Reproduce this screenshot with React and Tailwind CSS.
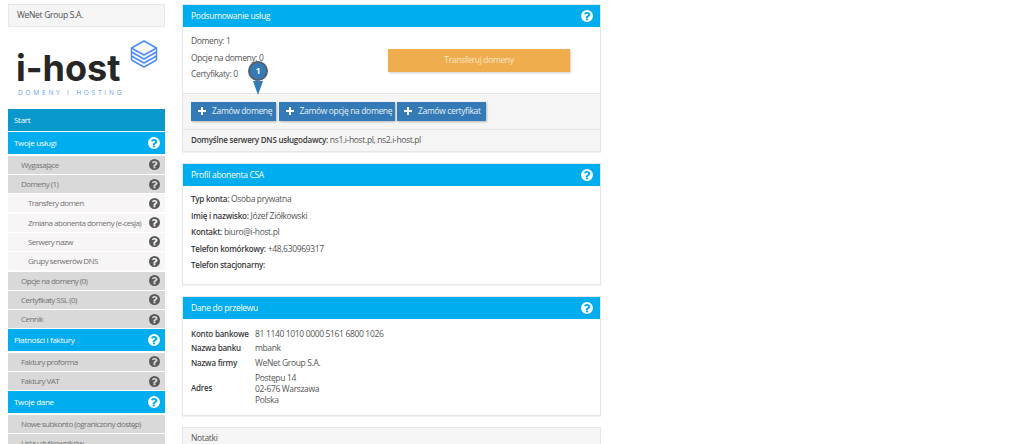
import React from "react";

const Help = ({ className = "text-[#5a5a5a]", size = 12 }) => (
  <svg width={size} height={size} viewBox="0 0 24 24" className={`${className} shrink-0`}>
    <path fill="currentColor" fillRule="evenodd" d="M12 0a12 12 0 1 1 0 24a12 12 0 0 1 0-24ZM12.300 4.200c-2.900 0-4.800 1.300-6.200 3.400l2.500 1.900c.9-1.100 1.700-1.800 3.300-1.800 1.200 0 2.400.7 2.400 1.800 0 .9-.7 1.400-1.900 2-1.400.8-2.900 1.700-2.900 3.900v.8h4.200v-.5c0-1.200.7-1.600 1.900-2.300 1.500-.8 3-1.900 3-4.100 0-3-3-5.100-6.300-5.100ZM9.900 17.100v3.300h4.200v-3.300Z" />
  </svg>
);

const Plus = () => (
  <svg width="8" height="8" viewBox="0 0 8 8" className="text-white shrink-0">
    <path fill="currentColor" d="M3 0h2v3h3v2H5v3H3V5H0V3h3Z" />
  </svg>
);

const Blue = ({ label, dark }) => (
  <div className={`h-[22px] mb-[1.400px] flex items-center justify-between pl-[6px] pr-[5px] text-white text-[8px] tracking-[-0.3px] ${dark ? "bg-[#0a97c9]" : "bg-[#00adef]"}`}>
    <span>{label}</span>
    {!dark && <Help className="text-white" size={12} />}
  </div>
);

const Sub = ({ label, light, noIcon }) => (
  <div className={`h-[18px] mb-[1.300px] flex items-center justify-between pr-[5.500px] text-[8px] tracking-[-0.55px] text-[#737373] ${light ? "bg-[#f7f5f6] pl-[20px]" : "bg-[#d9d9d9] pl-[13px]"}`}>
    <span className="whitespace-nowrap">{label}</span>
    {!noIcon && <Help size={11} />}
  </div>
);

const Panel = ({ title, children }) => (
  <section className="w-[419px] border border-[#e6e6e6] bg-white shadow-[0_1px_1px_rgba(0,0,0,0.05)]">
    <div className="h-[22px] bg-[#00adef] flex items-center justify-between pl-[8px] pr-[7px] text-white text-[8.500px] tracking-[-0.3px]">
      <span>{title}</span>
      <Help className="text-white" size={12} />
    </div>
    {children}
  </section>
);

const OrderBtn = ({ label, w }) => (
  <button className={`h-[19px] bg-[#337ab7] text-[#e8f0f7] text-[8.500px] tracking-[-0.35px] flex items-center gap-[6px] pl-[7px] shadow-[1px_1px_2px_rgba(0,0,0,0.25)] ${w}`}>
    <Plus />
    <span className="whitespace-nowrap">{label}</span>
  </button>
);

const Strong = ({ children }) => (
  <b className="font-semibold text-[8px] tracking-[-0.22px] text-[#3a3a3a]">{children}</b>
);

const Info = ({ k, v }) => (
  <div className="h-[16.500px] leading-[16.500px]">
    <Strong>{k}</Strong> {v}
  </div>
);

const BankRow = ({ k, children, className = "" }) => (
  <div className={`flex items-center ${className}`}>
    <div className="w-[64px] shrink-0 whitespace-nowrap"><Strong>{k}</Strong></div>
    <div>{children}</div>
  </div>
);

export default function App() {
  return (
    <div className="w-[1024px] h-[444px] overflow-hidden bg-white flex font-['Open_Sans',sans-serif] text-[#555]">
      <aside className="w-[157px] ml-[8px] shrink-0">
        <div className="mt-[4px] h-[23px] bg-[#f5f5f5] border border-[#e8e8e8] flex items-center pl-[8px] text-[8.500px] tracking-[-0.3px] text-[#505050]">
          WeNet Group S.A.
        </div>
        <div className="h-[82px] relative">
          <span className="absolute left-[8px] top-[21px] text-[36px] leading-[40px] font-['Inter',sans-serif] font-bold text-[#262626]">i-host</span>
          <span className="absolute left-[10px] top-[61px] text-[6.500px] tracking-[2.800px] text-[#5b9cf0] whitespace-nowrap">DOMENY I HOSTING</span>
          <svg width="28" height="30" viewBox="0 0 28 30" className="absolute left-[122px] top-[13px] text-[#4a8df0]" fill="none" stroke="currentColor" strokeWidth="1.500" strokeLinejoin="round">
            <path d="M14 1 26.500 8 14 15 1.500 8Z" />
            <path d="M1.500 12 14 19 26.500 12" />
            <path d="M1.500 16 14 23 26.500 16" />
            <path d="M1.500 20 14 27 26.500 20" />
            <path d="M1.500 8v12M26.500 8v12" />
          </svg>
        </div>
        <Blue label="Start" dark />
        <Blue label="Twoje usługi" />
        <Sub label="Wygasające" />
        <Sub label="Domeny (1)" />
        <Sub light label="Transfery domen" />
        <Sub light label="Zmiana abonenta domeny (e-cesja)" />
        <Sub light label="Serwery nazw" />
        <Sub light label="Grupy serwerów DNS" />
        <Sub label="Opcje na domeny (0)" />
        <Sub label="Certyfikaty SSL (0)" />
        <Sub label="Cennik" />
        <Blue label="Płatności i faktury" />
        <Sub label="Faktury proforma" />
        <Sub label="Faktury VAT" />
        <Blue label="Twoje dane" />
        <Sub noIcon label="Nowe subkonto (ograniczony dostęp)" />
        <Sub noIcon label="Lista użytkowników" />
      </aside>

      <main className="ml-[17px] pt-[4px] flex flex-col gap-[11px] text-[8.500px] tracking-[-0.35px]">
        <Panel title="Podsumowanie usług">
          <div className="h-[66px] relative pl-[8px] pt-[6px]">
            <div className="h-[16.500px] leading-[16.500px]">Domeny: 1</div>
            <div className="h-[16.500px] leading-[16.500px]">Opcje na domeny: 0</div>
            <div className="h-[16.500px] leading-[16.500px]">Certyfikaty: 0</div>
            <div className="absolute left-[205px] top-[22px] w-[182px] h-[23px] bg-[#f0ad4e] text-[#fbe6c8] flex items-center justify-center shadow-[1px_1px_2px_rgba(0,0,0,0.2)]">
              Transferuj domeny
            </div>
            <div className="absolute left-[65px] top-[34px] w-[20px] h-[20px] rounded-full bg-[#337ab7] border-2 border-[#55606c] flex items-center justify-center text-white text-[8.500px] font-bold">1</div>
            <svg width="10" height="14" viewBox="0 0 10 14" className="absolute left-[70px] top-[54px] text-[#337ab7]">
              <path fill="currentColor" d="M0 0h10L5 14Z" />
            </svg>
          </div>
          <div className="h-[37px] bg-[#f5f5f5] border-y border-[#e6e6e6] flex items-center gap-[2.500px] pl-[8px] pb-[1px]">
            <OrderBtn label="Zamów domenę" w="w-[85px]" />
            <OrderBtn label="Zamów opcję na domenę" w="w-[116px]" />
            <OrderBtn label="Zamów certyfikat" w="w-[89px]" />
          </div>
          <div className="h-[21px] bg-[#f5f5f5] flex items-center pl-[8px]">
            <span><Strong>Domyślne serwery DNS usługodawcy:</Strong> ns1.i-host.pl, ns2.i-host.pl</span>
          </div>
        </Panel>

        <Panel title="Profil abonenta CSA">
          <div className="h-[98px] pl-[8px] pt-[5px]">
            <Info k="Typ konta:" v="Osoba prywatna" />
            <Info k="Imię i nazwisko:" v="Józef Ziółkowski" />
            <Info k="Kontakt:" v="biuro@i-host.pl" />
            <Info k="Telefon komórkowy:" v="+48.630969317" />
            <Info k="Telefon stacjonarny:" v="" />
          </div>
        </Panel>

        <Panel title="Dane do przelewu">
          <div className="h-[96px] pl-[8px] pt-[8px]">
            <BankRow k="Konto bankowe" className="h-[14.500px]">81 1140 1010 0000 5161 6800 1026</BankRow>
            <BankRow k="Nazwa banku" className="h-[14.500px]">mbank</BankRow>
            <BankRow k="Nazwa firmy" className="h-[14.500px]">WeNet Group S.A.</BankRow>
            <BankRow k="Adres" className="mt-[1px]">
              <div className="leading-[11px]">Postępu 14</div>
              <div className="leading-[11px]">02-676 Warszawa</div>
              <div className="leading-[11px]">Polska</div>
            </BankRow>
          </div>
        </Panel>

        <section className="w-[419px] border border-[#e6e6e6] bg-[#f5f5f5] h-[40px] pl-[8px] pt-[4px]">Notatki</section>
      </main>
    </div>
  );
}
